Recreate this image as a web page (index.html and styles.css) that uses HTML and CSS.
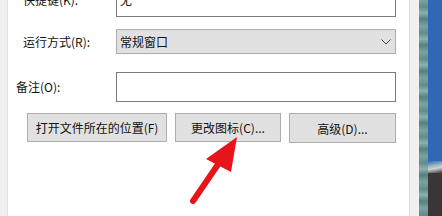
FILE: index.html
```html
<!DOCTYPE html>
<html lang="zh-CN">
<head>
<meta charset="utf-8">
<link rel="stylesheet" href="styles.css">
</head>
<body>
<div class="window">
  <div class="edge-left"></div>
  <div class="panel">
    <div class="row row-key">
      <span class="label">快捷键(K):</span>
      <div class="field">无</div>
    </div>
    <div class="row row-run">
      <span class="label">运行方式(R):</span>
      <div class="select">
        <span>常规窗口</span>
        <svg class="chev" width="10" height="6" viewBox="0 0 10 6"><path d="M0.5 0.5 L5 5 L9.5 0.5" fill="none" stroke="#444" stroke-width="1"/></svg>
      </div>
    </div>
    <div class="row row-note">
      <span class="label label-note">备注(O):</span>
      <div class="field field-tall"></div>
    </div>
    <div class="buttons">
      <div class="btn btn-wide">打开文件所在的位置(F)</div>
      <div class="btn">更改图标(C)...</div>
      <div class="btn btn-tall">高级(D)...</div>
    </div>
  </div>
  <div class="edge-right"></div>
  <div class="desktop">
    <div class="texture"></div>
    <div class="scene">
      <div class="sky"></div>
      <div class="band"></div>
      <div class="ground"></div>
    </div>
  </div>
</div>
<svg class="arrow" width="442" height="216" viewBox="0 0 442 216">
  <line x1="193" y1="201" x2="219" y2="163" stroke="#e8141c" stroke-width="6" stroke-linecap="round"/>
  <polygon points="237,137 206,159 231,172" fill="#e8141c"/>
</svg>
</body>
</html>
```
FILE: styles.css
```css
html, body {
  margin: 0;
  padding: 0;
  background: #ffffff;
  overflow: hidden;
}
body {
  width: 442px;
  height: 216px;
  position: relative;
  font-family: "Noto Sans CJK SC", "Microsoft YaHei", sans-serif;
  font-size: 12px;
  color: #111;
}
.window {
  display: flex;
  height: 216px;
}
.edge-left {
  width: 7px;
  flex: none;
  background: #f0f0f0;
  border-right: 1px solid #e2e2e2;
}
.panel {
  width: 401px;
  flex: none;
  display: flex;
  flex-direction: column;
  background: #fff;
}
.row {
  display: flex;
  align-items: center;
}
.label {
  width: 93px;
  padding-left: 15px;
  flex: none;
  line-height: 14px;
}
.label-note {
  width: 100px;
  padding-left: 8px;
}
.row-key {
  margin-top: -9px;
  height: 26px;
}
.row-key .label {
  margin-top: -8px;
}
.field {
  width: 278px;
  height: 24px;
  border: 1px solid #7a7a7a;
  background: #fff;
  box-sizing: content-box;
  display: flex;
  align-items: center;
}
.row-key .field {
  padding-left: 3px;
  padding-top: 2px;
  height: 22px;
  width: 275px;
  align-items: flex-start;
  line-height: 12px;
}
.row-run {
  margin-top: 12px;
}
.select {
  width: 272px;
  height: 23px;
  border: 1px solid #adadad;
  background: #e1e1e1;
  display: flex;
  align-items: center;
  justify-content: space-between;
  padding-left: 3px;
  padding-right: 3px;
}
.chev {
  margin-right: 1px;
  margin-top: 1px;
}
.row-note {
  margin-top: 18px;
}
.field-tall {
  height: 28px;
}
.buttons {
  display: flex;
  gap: 8px;
  margin-top: 11px;
  padding-left: 19px;
  align-items: flex-start;
}
.btn {
  width: 104px;
  height: 27px;
  border: 1px solid #adadad;
  background: #e1e1e1;
  display: flex;
  align-items: center;
  justify-content: center;
  flex: none;
}
.btn-wide {
  width: 138px;
}
.btn-tall {
  height: 28px;
  width: 105px;
}
.edge-right {
  width: 9px;
  flex: none;
  background: #f0f0f0;
  border-left: 1px solid #dedede;
}
.desktop {
  flex: 1;
  display: flex;
}
.texture {
  width: 9px;
  flex: none;
  background: repeating-linear-gradient(180deg, #7aa3a3 0px, #5f8c8d 7px, #8cb1ad 13px, #55807f 19px, #7aa3a3 26px);
}
.scene {
  flex: 1;
  display: flex;
  flex-direction: column;
}
.sky {
  height: 161px;
  background: #2f69b5;
}
.band {
  height: 12px;
  background: linear-gradient(170deg, #2f69b5 0%, #9fb9bd 40%, #c9d6d3 60%, #3c3a3c 100%);
}
.ground {
  flex: 1;
  background: #3a3638;
}
.arrow {
  position: absolute;
  left: 0;
  top: 0;
  pointer-events: none;
}
```
